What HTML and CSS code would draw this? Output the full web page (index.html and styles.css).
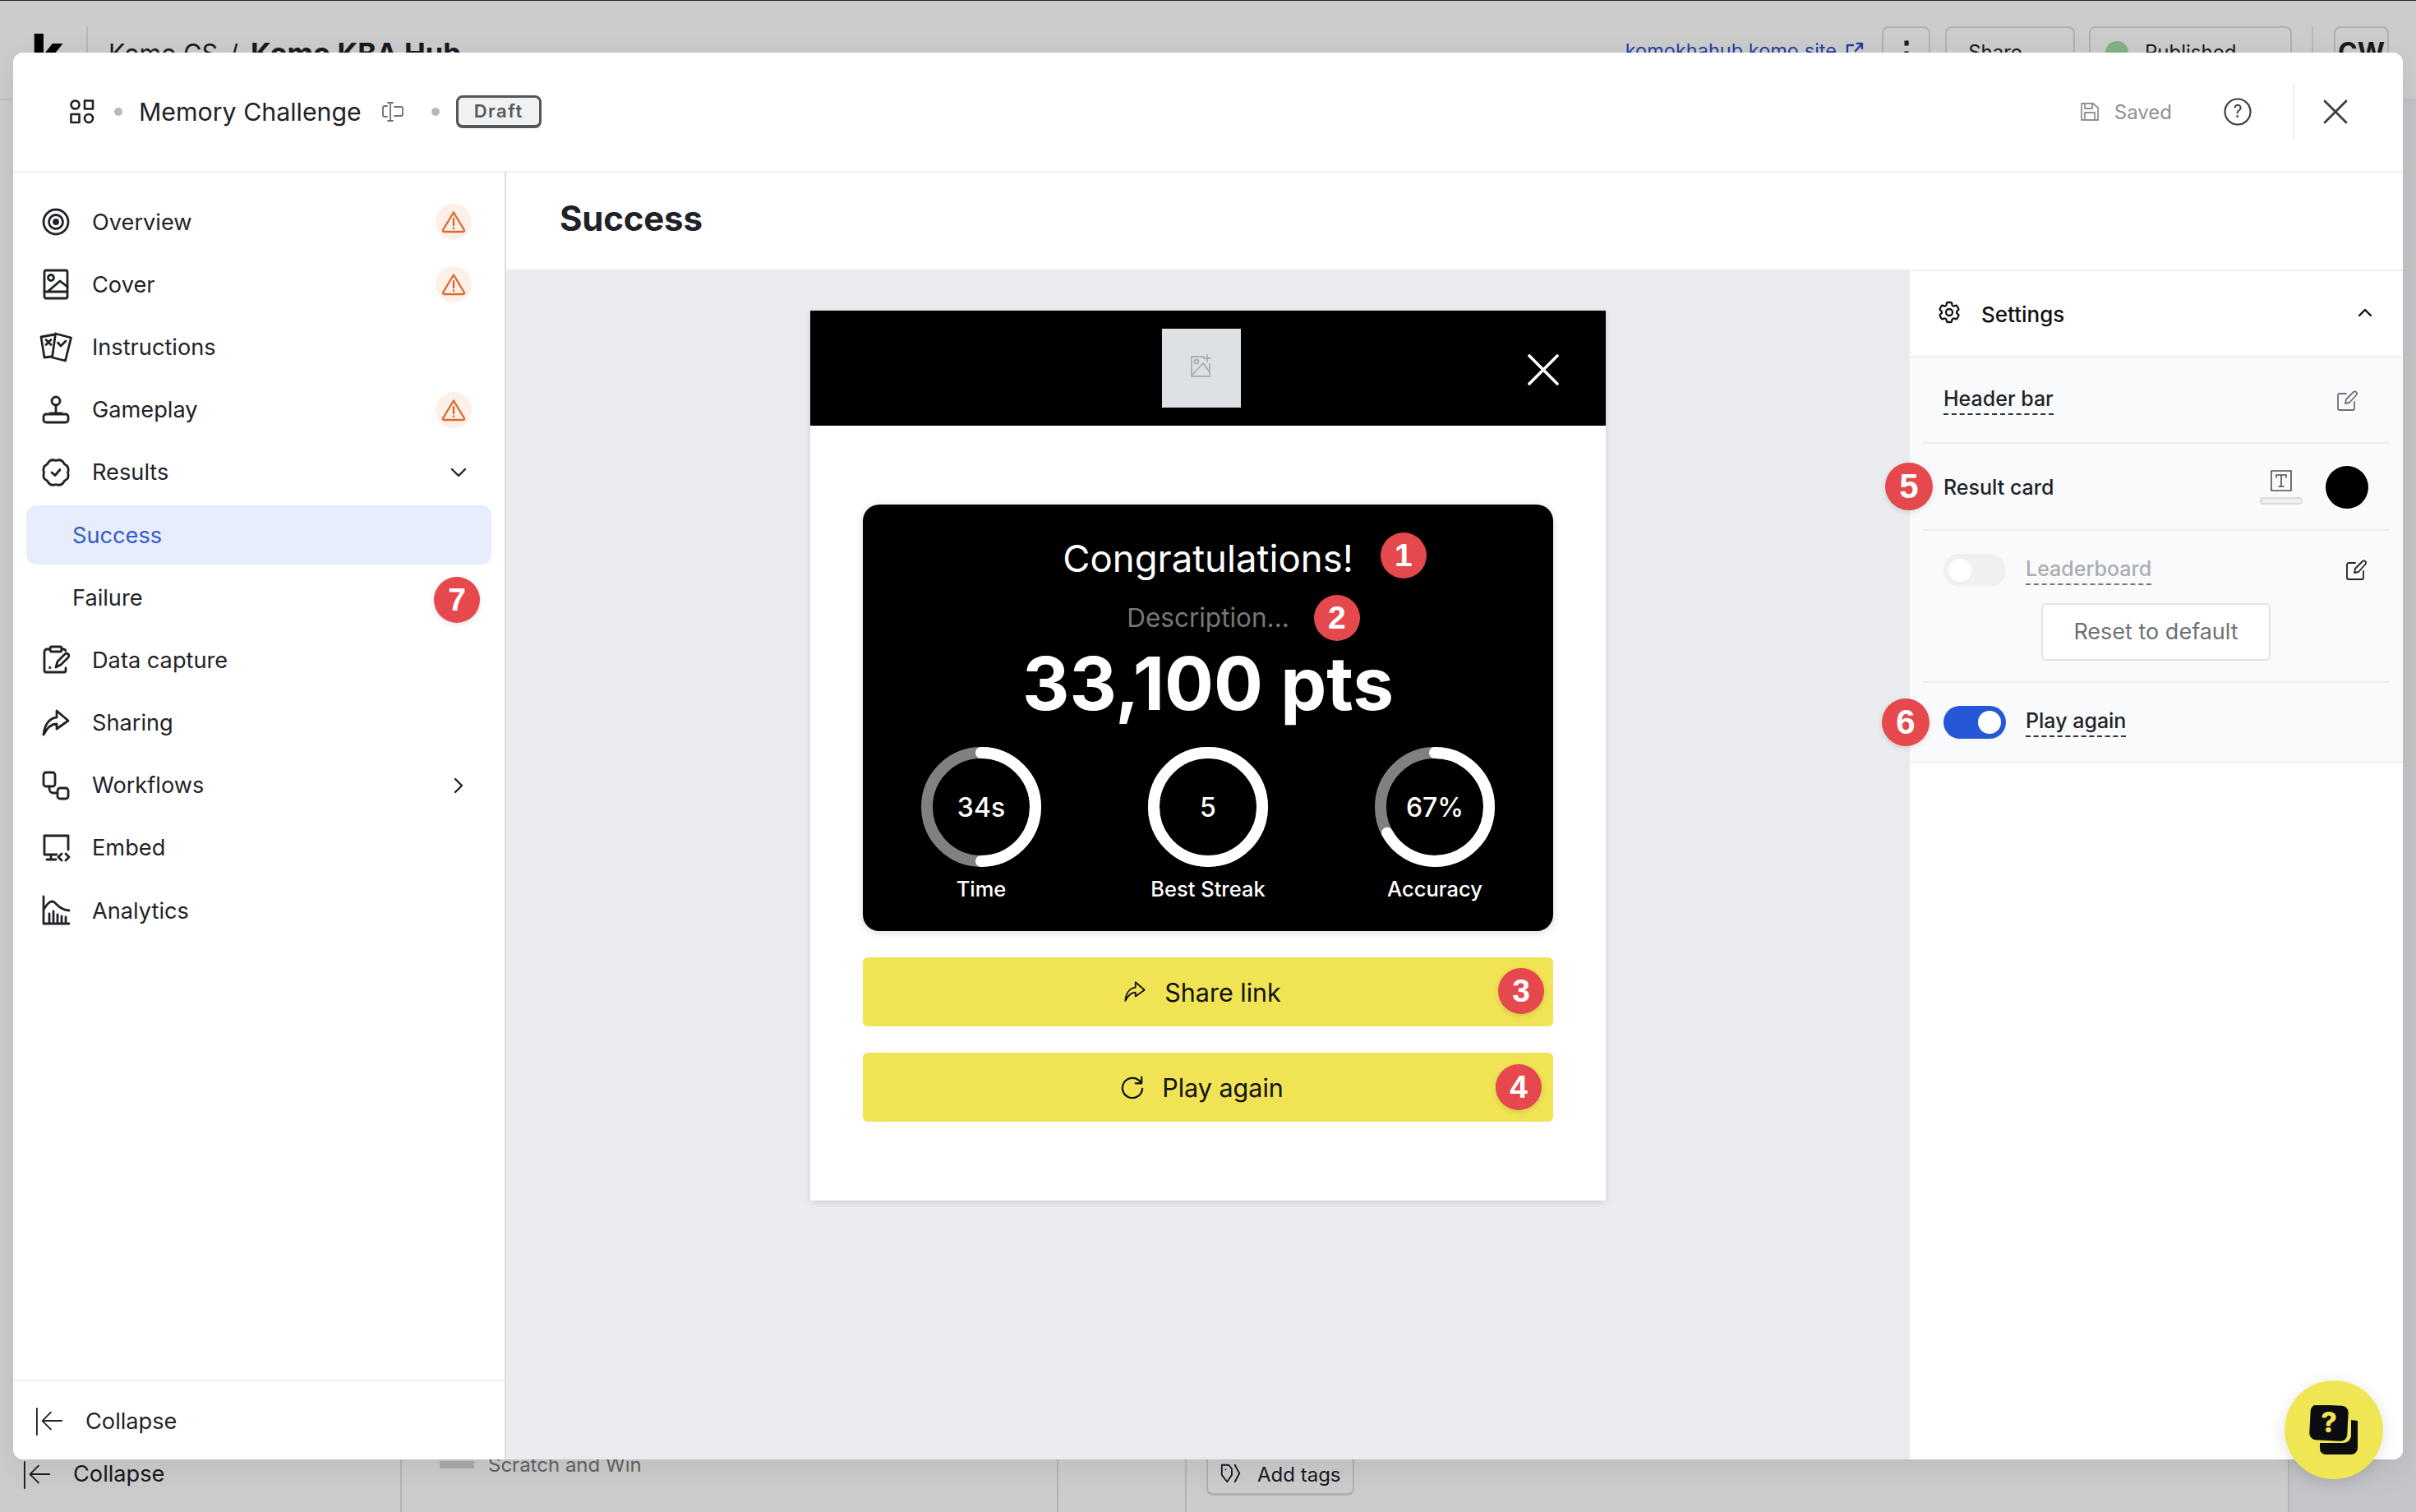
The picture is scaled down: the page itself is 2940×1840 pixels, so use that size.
FILE: index.html
```html
<!DOCTYPE html>
<html lang="en">
<head>
  <meta charset="UTF-8" />
  <title>Memory Challenge</title>
  <link rel="stylesheet" href="styles.css">
</head>
<body>
<div class="app">

  <!-- page behind the modal -->
  <header class="topbar">
    <span class="logo">k</span>
    <span class="topbar-line"></span>
    <span class="crumb">Komo CS</span>
    <span class="crumb-sep">/</span>
    <span class="crumb-strong">Komo KBA Hub</span>
    <a class="site-link">komokhahub.komo.site</a>
    <svg class="ext-icon" viewBox="0 0 24 24"><path d="M10 4H3v17h17v-7M13 11l8-9M15 2h6v6"/></svg>
    <span class="top-btn kebab">⋮</span>
    <span class="top-btn share">Share</span>
    <span class="top-btn published"><i class="green-dot"></i>Published</span>
    <span class="topbar-line second"></span>
    <span class="top-btn avatar">CW</span>
  </header>
  <div class="page-cols">
    <div class="page-col col-left">
      <svg class="collapse-icon" viewBox="0 0 36 36"><path d="M2 1v34M34 17H10M20 6L9 17l11 11"/></svg>
      <span>Collapse</span>
    </div>
    <div class="page-col col-mid"><i class="grey-bar"></i><span class="scratch">Scratch and Win</span></div>
    <div class="page-col col-gap"></div>
    <div class="page-col col-tags">
      <span class="tags-btn">
        <svg viewBox="0 0 30 30"><path d="M3 4h9l4 5v8l-6 9-7-9zM20 4l6 11-6 11M8 10h.1"/></svg>
        Add tags
      </span>
    </div>
    <div class="page-col col-end"></div>
  </div>
  <div class="dim"></div>

  <!-- modal -->
  <div class="modal">
    <div class="modal-head">
      <svg class="shapes-icon" viewBox="0 0 30 30"><circle cx="6.500" cy="6.500" r="5"/><rect x="18" y="1.500" width="10" height="10"/><rect x="1.500" y="18" width="10" height="10"/><circle cx="23" cy="23" r="5"/></svg>
      <i class="head-dot"></i>
      <span class="game-title">Memory Challenge</span>
      <svg class="rename-icon" viewBox="0 0 26 24"><path d="M7 1h6M7 23h6M10 1v22M6 5H3a2 2 0 0 0-2 2v9a2 2 0 0 0 2 2h3M15 6h8a2 2 0 0 1 2 2v7a2 2 0 0 1-2 2h-8"/></svg>
      <i class="head-dot"></i>
      <span class="draft">Draft</span>
      <svg class="saved-icon" viewBox="0 0 22 22"><path d="M1 1h14l6 5v15H1zM5 1v6h9V1M5 21v-9h12v9"/></svg>
      <span class="saved">Saved</span>
      <svg class="help-icon" viewBox="0 0 34 34"><circle cx="17" cy="17" r="15.500"/><text x="17" y="24" text-anchor="middle">?</text></svg>
      <span class="head-divider"></span>
      <svg class="close-icon" viewBox="0 0 30 30"><path d="M2 2l26 26M28 2L2 28"/></svg>
    </div>

    <div class="modal-body">
      <aside class="sidebar">
        <nav class="nav">
          <div class="nav-row">
            <svg class="nav-icon" viewBox="0 0 36 36"><circle cx="18" cy="18" r="15"/><circle cx="18" cy="18" r="8.500"/><circle class="solid" cx="18" cy="18" r="2.500"/></svg>
            <span>Overview</span>
            <span class="warn"><svg viewBox="0 0 30 28"><path d="M15 2.500L28 24a1.500 1.500 0 0 1-1.300 2H3.300A1.500 1.500 0 0 1 2 24zM15 10v8M15 21.500v.5"/></svg></span>
          </div>
          <div class="nav-row">
            <svg class="nav-icon" viewBox="0 0 36 36"><rect x="4" y="1" width="28" height="34" rx="2"/><path d="M4 27h28M9 26l14-12 9 7"/><circle cx="12" cy="10" r="3.500"/></svg>
            <span>Cover</span>
            <span class="warn"><svg viewBox="0 0 30 28"><path d="M15 2.500L28 24a1.500 1.500 0 0 1-1.300 2H3.300A1.500 1.500 0 0 1 2 24zM15 10v8M15 21.500v.5"/></svg></span>
          </div>
          <div class="nav-row">
            <svg class="nav-icon" viewBox="0 0 36 36"><path d="M16 3L-.5 6l4 25 8-1M17 2l19 5-7 28-16-4zM5.500 9.500l6 6M11.500 9.500l-6 6M20 13l3.500 4 6-6" transform="translate(.5 0)"/></svg>
            <span>Instructions</span>
          </div>
          <div class="nav-row">
            <svg class="nav-icon" viewBox="0 0 36 36"><circle cx="18" cy="7" r="5"/><path d="M18 12v10M11 22h14"/><rect x="3" y="23" width="30" height="10" rx="3"/></svg>
            <span>Gameplay</span>
            <span class="warn"><svg viewBox="0 0 30 28"><path d="M15 2.500L28 24a1.500 1.500 0 0 1-1.300 2H3.300A1.500 1.500 0 0 1 2 24zM15 10v8M15 21.500v.5"/></svg></span>
          </div>
          <div class="nav-row">
            <svg class="nav-icon" viewBox="0 0 36 36"><path d="M32.500 18Q35.100 25.100 28.300 28.300Q25.100 35.100 18 32.500Q10.900 35.100 7.700 28.300Q.9 25.100 3.500 18Q.9 10.900 7.700 7.700Q10.900 .9 18 3.500Q25.100 .9 28.300 7.700Q35.100 10.900 32.500 18ZM13 18l4 3.500 6-7"/></svg>
            <span>Results</span>
            <svg class="chev" viewBox="0 0 20 20"><path d="M2 6l8 8 8-8"/></svg>
          </div>
          <div class="nav-row sub active"><span>Success</span></div>
          <div class="nav-row sub">
            <span>Failure</span>
            <b class="num num-7">7</b>
          </div>
          <div class="nav-row">
            <svg class="nav-icon" viewBox="0 0 36 36"><path d="M11 5H7a3 3 0 0 0-3 3v23a2 2 0 0 0 2 2h22a2 2 0 0 0 2-2v-3M25 5h3a3 3 0 0 1 2 2"/><rect x="11" y="2" width="14" height="6" rx="2"/><path d="M18 27l2-7 9-9a2.500 2.500 0 0 1 4 4l-9 9zM10.500 27.500h.5"/></svg>
            <span>Data capture</span>
          </div>
          <div class="nav-row">
            <svg class="nav-icon" viewBox="0 0 36 36"><path d="M19 3l14 12-14 10v-6C12 19 7 24 3 32c1-12 7-20 16-21z"/></svg>
            <span>Sharing</span>
          </div>
          <div class="nav-row">
            <svg class="nav-icon" viewBox="0 0 36 36"><rect x="3" y="2" width="14" height="17" rx="3"/><rect x="20" y="21" width="13" height="13" rx="3"/><path d="M10 19v3a5 5 0 0 0 5 5h5"/></svg>
            <span>Workflows</span>
            <svg class="chev" viewBox="0 0 20 20"><path d="M6 2l8 8-8 8"/></svg>
          </div>
          <div class="nav-row">
            <svg class="nav-icon" viewBox="0 0 36 36"><path d="M4 26V3h29v17M4 26h15M12 26v6M7 32h11M25 25l-4 4 4 4M30 25l4 4-4 4"/></svg>
            <span>Embed</span>
          </div>
          <div class="nav-row">
            <svg class="nav-icon" viewBox="0 0 36 36"><path d="M3 1v33h31M3 17c5-8 9-12 13-9 5 4 8 9 18 10M10 33V22M15 33V19M20 33V23M25 33V25M30 33V26"/></svg>
            <span>Analytics</span>
          </div>
        </nav>
        <div class="side-foot">
          <svg class="collapse-icon" viewBox="0 0 36 36"><path d="M2 1v34M34 17H10M20 6L9 17l11 11"/></svg>
          <span>Collapse</span>
        </div>
      </aside>

      <main class="editor">
        <h1 class="editor-title">Success</h1>
        <div class="editor-body">
          <div class="canvas">
            <div class="preview">
              <div class="preview-bar">
                <div class="logo-slot">
                  <svg viewBox="0 0 28 28"><path d="M17 3H2v24h22V12M21 1v8M17 5h8M2 26l14-15 8 11"/><circle cx="8" cy="9" r="2.500"/></svg>
                </div>
                <svg class="preview-close" viewBox="0 0 38 38"><path d="M2 2l34 34M36 2L2 36"/></svg>
              </div>
              <div class="preview-body">
                <div class="result-card">
                  <div class="congrats"><span>Congratulations!<b class="num num-1">1</b></span></div>
                  <div class="desc"><span>Description...<b class="num num-2">2</b></span></div>
                  <div class="points">33,100 pts</div>
                  <div class="stats">
                    <div class="stat">
                      <svg class="ring" viewBox="0 0 146 146"><circle class="track" cx="73" cy="73" r="66"/><circle class="prog" cx="73" cy="73" r="66" pathLength="100" stroke-dasharray="50 100"/></svg>
                      <span class="ring-val">34s</span>
                      <span class="stat-label">Time</span>
                    </div>
                    <div class="stat">
                      <svg class="ring" viewBox="0 0 146 146"><circle class="track" cx="73" cy="73" r="66"/><circle class="prog" cx="73" cy="73" r="66" pathLength="100" stroke-dasharray="100 100"/></svg>
                      <span class="ring-val">5</span>
                      <span class="stat-label">Best Streak</span>
                    </div>
                    <div class="stat">
                      <svg class="ring" viewBox="0 0 146 146"><circle class="track" cx="73" cy="73" r="66"/><circle class="prog" cx="73" cy="73" r="66" pathLength="100" stroke-dasharray="67 100"/></svg>
                      <span class="ring-val">67%</span>
                      <span class="stat-label">Accuracy</span>
                    </div>
                  </div>
                </div>
                <div class="cta">
                  <svg viewBox="0 0 36 36"><path d="M19 3l14 12-14 10v-6C12 19 7 24 3 32c1-12 7-20 16-21z"/></svg>
                  <span>Share link</span>
                  <b class="num num-3">3</b>
                </div>
                <div class="cta">
                  <svg viewBox="0 0 30 30"><path d="M26 9A13 13 0 1 0 28 17M27 2v8h-8"/></svg>
                  <span>Play again</span>
                  <b class="num num-4">4</b>
                </div>
              </div>
            </div>
          </div>

          <section class="settings">
            <div class="settings-head">
              <svg class="gear" viewBox="0 0 24 24"><path d="M9.594 3.94c.09-.542.56-.94 1.11-.94h2.593c.55 0 1.02.398 1.11.94l.213 1.281c.063.374.313.686.645.87.074.04.147.083.22.127.324.196.72.257 1.075.124l1.217-.456a1.125 1.125 0 011.37.49l1.296 2.247a1.125 1.125 0 01-.26 1.431l-1.003.827c-.293.24-.438.613-.431.992a6.759 6.759 0 010 .255c-.007.378.138.75.43.99l1.005.828c.424.35.534.954.26 1.43l-1.298 2.247a1.125 1.125 0 01-1.369.491l-1.217-.456c-.355-.133-.75-.072-1.076.124a6.57 6.57 0 01-.22.128c-.331.183-.581.495-.644.869l-.213 1.28c-.09.543-.56.941-1.11.941h-2.594c-.55 0-1.02-.398-1.11-.94l-.213-1.281c-.062-.374-.312-.686-.644-.87a6.52 6.52 0 01-.22-.127c-.325-.196-.72-.257-1.076-.124l-1.217.456a1.125 1.125 0 01-1.369-.49l-1.297-2.247a1.125 1.125 0 01.26-1.431l1.004-.827c.292-.24.437-.613.43-.992a6.932 6.932 0 010-.255c.007-.378-.138-.75-.43-.99l-1.004-.828a1.125 1.125 0 01-.26-1.43l1.297-2.247a1.125 1.125 0 011.37-.491l1.216.456c.356.133.751.072 1.076-.124.072-.044.146-.087.22-.128.332-.183.582-.495.644-.869l.214-1.281z"/><circle cx="12" cy="12" r="3"/></svg>
              <span>Settings</span>
              <svg class="chev-up" viewBox="0 0 20 20"><path d="M3 14l7-7 7 7"/></svg>
            </div>
            <div class="settings-list">
              <div class="set-row row-header">
                <span class="dashed">Header bar</span>
                <svg class="edit-icon soft" viewBox="0 0 26 26"><path d="M12 4H4a2 2 0 0 0-2 2v16a2 2 0 0 0 2 2h16a2 2 0 0 0 2-2v-8M11 16l1-5L21 2a2.500 2.500 0 0 1 3.500 3.500L16 15z"/></svg>
              </div>
              <div class="set-row row-card">
                <b class="num num-5">5</b>
                <span>Result card</span>
                <span class="text-style">
                  <svg viewBox="0 0 26 26"><path d="M1 1h24v24H1zM7 9V6h12v3M13 6v14M10 20h6"/></svg>
                  <i></i>
                </span>
                <i class="swatch"></i>
              </div>
              <div class="set-row row-board">
                <div class="board-top">
                  <i class="toggle"></i>
                  <span class="dashed muted">Leaderboard</span>
                  <svg class="edit-icon" viewBox="0 0 26 26"><path d="M12 4H4a2 2 0 0 0-2 2v16a2 2 0 0 0 2 2h16a2 2 0 0 0 2-2v-8M11 16l1-5L21 2a2.500 2.500 0 0 1 3.500 3.500L16 15z"/></svg>
                </div>
                <span class="reset">Reset to default</span>
              </div>
              <div class="set-row row-play">
                <b class="num num-6">6</b>
                <i class="toggle on"></i>
                <span class="dashed">Play again</span>
              </div>
            </div>
          </section>
        </div>
      </main>
    </div>
  </div>

  <!-- help bubble -->
  <div class="chat">
    <svg viewBox="0 0 60 60"><path d="M51 18l8 1v33a8 8 0 0 1-8 8H20a7 7 0 0 1-7-7v-7h29a9 9 0 0 0 9-9z"/><rect x="1" y="0" width="46" height="43" rx="8" transform="rotate(3 24 21)"/><text x="24" y="33" text-anchor="middle">?</text></svg>
  </div>
</div>
</body>
</html>
```

FILE: styles.css
```css
* {
  box-sizing: border-box;
}

html, body {
  margin: 0;
  height: 100%;
}

body {
  font-family: Inter, "Liberation Sans", sans-serif;
  color: #1f2328;
  background: #fff;
  overflow: hidden;
}

svg {
  display: block;
  flex: none;
  fill: none;
  stroke: currentColor;
  stroke-width: 2.4;
  stroke-linecap: round;
  stroke-linejoin: round;
}

i {
  display: block;
}

.app {
  position: relative;
  width: 2940px;
  height: 1840px;
  display: flex;
  flex-direction: column;
}

/* page behind */
.topbar {
  height: 122px;
  flex: none;
  display: flex;
  align-items: flex-start;
  padding: 31px 33px 0 38px;
  border-top: 1px solid #333;
  border-bottom: 2px solid #eee;
  font-size: 30.500px;
  line-height: 66px;
}

.logo {
  font-size: 66px;
  font-weight: 800;
  color: #000;
  width: 67px;
}

.topbar-line {
  width: 2px;
  height: 64px;
  background: #e4e4e4;
}

.topbar-line.second {
  margin: 0 25px 0 24px;
}

.crumb {
  margin-left: 25px;
}

.crumb-sep {
  margin: 0 15px 0 14px;
}

.crumb-strong {
  font-size: 34.500px;
  font-weight: 700;
}

.site-link {
  margin-left: auto;
  font-size: 23.500px;
  line-height: 60px;
  color: #2a51c8;
}

.ext-icon {
  width: 24px;
  height: 24px;
  margin: 19px 21px 0 10px;
  color: #2a51c8;
}

.top-btn {
  height: 70px;
  border: 2px solid #ddd;
  border-bottom-width: 3px;
  border-radius: 8px;
  font-size: 24px;
  line-height: 60px;
  text-align: center;
}

.kebab {
  width: 59px;
  font-size: 38px;
  font-weight: 700;
  margin-right: 18px;
}

.share {
  width: 158px;
  margin-right: 17px;
  padding-right: 36px;
}

.published {
  width: 247px;
  display: flex;
  padding-left: 18px;
  gap: 20px;
}

.green-dot {
  width: 28px;
  height: 28px;
  margin-top: 16px;
  border-radius: 50%;
  background: #a0e0a8;
}

.avatar {
  width: 67px;
  font-size: 32px;
  font-weight: 700;
}

.page-cols {
  flex: 1;
  display: flex;
}

.page-col {
  border-right: 2px solid #e2e2e2;
  display: flex;
  align-items: flex-end;
}

.col-left {
  width: 489px;
  gap: 27px;
  padding: 0 0 28px 28px;
  font-size: 27.200px;
  line-height: 36px;
}

.col-mid {
  width: 799px;
  padding: 0 0 41px 46px;
  gap: 17px;
  font-size: 24px;
  line-height: 32px;
  color: #7c7c7c;
}

.grey-bar {
  width: 42px;
  height: 9px;
  margin-bottom: 12px;
  background: #d8d8d8;
}

.col-gap {
  width: 156px;
}

.col-tags {
  width: 1342px;
  padding: 0 0 20px 24px;
}

.col-end {
  flex: 1;
  border: 0;
  background: #f6f7fb;
}

.tags-btn {
  width: 180px;
  height: 80px;
  display: flex;
  align-items: flex-end;
  gap: 18px;
  padding: 0 0 6px 14px;
  border: 2px solid #ddd;
  border-bottom-width: 3px;
  border-radius: 8px;
  font-size: 24px;
  line-height: 32px;
}

.tags-btn svg {
  width: 28px;
  height: 28px;
  margin-bottom: 4px;
  stroke-width: 2;
}

.dim {
  position: absolute;
  inset: 0;
  background: rgba(0, 0, 0, 0.2);
}

/* modal */
.modal {
  position: absolute;
  top: 64px;
  left: 16px;
  width: 2908px;
  height: 1712px;
  display: flex;
  flex-direction: column;
  background: #fff;
  border-radius: 12px;
  overflow: hidden;
  box-shadow: 0 10px 40px rgba(0, 0, 0, 0.08);
}

.modal-head {
  height: 146px;
  flex: none;
  display: flex;
  align-items: center;
  padding-left: 69px;
  border-bottom: 2px solid #eeeff1;
}

.shapes-icon {
  width: 30px;
  height: 30px;
  stroke-width: 2.6;
}

.head-dot {
  width: 10px;
  height: 10px;
  border-radius: 50%;
  background: #b8b8b8;
  margin: 0 20px 0 24px;
}

.game-title {
  font-size: 30.300px;
  line-height: 40px;
}

.rename-icon {
  width: 26px;
  height: 24px;
  margin: 0 10px 0 25px;
  color: #6a6f75;
  stroke-width: 1.8;
}

.draft {
  width: 104px;
  height: 40px;
  border: 3px solid #555;
  border-bottom-width: 4px;
  border-radius: 8px;
  background: #f0f1f2;
  font-size: 22px;
  font-weight: 600;
  line-height: 33px;
  letter-spacing: 1.500px;
  text-align: center;
  color: #55585c;
}

.saved-icon {
  width: 22px;
  height: 22px;
  margin-left: auto;
  color: #8e9196;
  stroke-width: 1.800;
}

.saved {
  margin-left: 19px;
  font-size: 24px;
  color: #8e9196;
}

.help-icon {
  width: 34px;
  height: 34px;
  margin-left: 63px;
  color: #3a3d42;
  stroke-width: 2.200;
}

.help-icon text {
  font-size: 21px;
  fill: currentColor;
  stroke: none;
}

.head-divider {
  width: 2px;
  height: 68px;
  margin-left: 50px;
  background: #efefef;
}

.close-icon {
  width: 30px;
  height: 30px;
  margin: 0 67px 0 35px;
  color: #3a3d42;
  stroke-width: 2.800;
}

.modal-body {
  flex: 1;
  display: flex;
  min-height: 0;
}

/* sidebar */
.sidebar {
  width: 600px;
  flex: none;
  display: flex;
  flex-direction: column;
  justify-content: space-between;
  border-right: 2px solid #dcdcdc;
}

.nav {
  padding-top: 22px;
}

.nav-row {
  position: relative;
  height: 76.200px;
  display: flex;
  align-items: center;
  gap: 26px;
  padding: 0 40px 0 34px;
  font-size: 27.200px;
}

.nav-icon {
  width: 36px;
  height: 36px;
  overflow: visible;
  stroke-width: 2.800;
}

.solid {
  fill: currentColor;
}

.warn {
  width: 44px;
  height: 44px;
  margin-left: auto;
  display: flex;
  align-items: center;
  justify-content: center;
  border-radius: 50%;
  background: #fdf0e9;
  color: #dd6b2f;
}

.warn svg {
  width: 30px;
  height: 28px;
  stroke-width: 2.400;
}

.chev {
  width: 20px;
  height: 20px;
  margin: 0 6px 0 auto;
}

.sub {
  padding-left: 72px;
}

.active {
  height: 72.200px;
  margin: 2px 0 2px 16px;
  width: 566px;
  padding-left: 56px;
  background: #e8edfb;
  border-radius: 12px;
  color: #2f5ccb;
}

.num {
  position: absolute;
  display: flex;
  align-items: center;
  justify-content: center;
  width: 56px;
  height: 56px;
  border-radius: 50%;
  background: #e5484d;
  color: #fff;
  font-family: "Liberation Sans", sans-serif;
  font-size: 39px;
  font-weight: 700;
  box-shadow: 0 2px 6px rgba(0, 0, 0, 0.12);
}

.num-7 {
  right: 30px;
  top: 13px;
}

.side-foot {
  height: 97px;
  flex: none;
  display: flex;
  align-items: center;
  gap: 27px;
  padding: 2px 0 0 27px;
  border-top: 2px solid #eeeff1;
  font-size: 27.200px;
}

.collapse-icon {
  width: 34px;
  height: 34px;
  stroke-width: 2;
}

/* editor */
.editor {
  flex: 1;
  display: flex;
  flex-direction: column;
  min-width: 0;
}

.editor-title {
  height: 118px;
  flex: none;
  margin: 0;
  padding: 0 0 0 65px;
  font-size: 42px;
  font-weight: 700;
  letter-spacing: -0.200px;
  line-height: 112px;
}

.editor-body {
  flex: 1;
  display: flex;
  min-height: 0;
}

.canvas {
  flex: 1;
  padding-top: 50px;
  display: flex;
  justify-content: center;
  align-items: flex-start;
  background: #e9ebee;
}

.preview {
  width: 968px;
  background: #fff;
  box-shadow: 0 2px 8px rgba(0, 0, 0, 0.12);
}

.preview-bar {
  position: relative;
  height: 140px;
  display: flex;
  align-items: center;
  justify-content: center;
  padding-right: 16px;
  background: #000;
}

.logo-slot {
  width: 96px;
  height: 96px;
  display: flex;
  align-items: center;
  justify-content: center;
  padding-bottom: 6px;
  background: #dde1e5;
  color: #a9aeb3;
}

.logo-slot svg {
  width: 28px;
  height: 28px;
  stroke-width: 1.800;
}

.preview-close {
  position: absolute;
  right: 57px;
  top: 53px;
  width: 38px;
  height: 38px;
  color: #fff;
  stroke-width: 3.600;
}

.preview-body {
  padding: 96px 64px 96px;
}

.result-card {
  height: 519px;
  padding-top: 40px;
  background: #000;
  border-radius: 20px;
  color: #fff;
  text-align: center;
  box-shadow: 0 2px 10px rgba(0, 0, 0, 0.15);
}

.congrats {
  font-size: 45.500px;
  line-height: 52px;
}

.congrats span,
.desc span {
  position: relative;
  display: inline-block;
}

.num-1 {
  left: 100%;
  margin-left: 33px;
  top: -6px;
}

.desc {
  margin-top: 24px;
  font-size: 31.500px;
  line-height: 44px;
  color: #777;
}

.num-2 {
  left: 100%;
  margin-left: 30px;
  top: -6px;
}

.points {
  margin-top: 10px;
  font-size: 89px;
  font-weight: 700;
  line-height: 96px;
}

.stats {
  margin-top: 29px;
  display: grid;
  grid-template-columns: repeat(3, 276px);
  justify-content: center;
}

.stat {
  position: relative;
  display: flex;
  flex-direction: column;
  align-items: center;
}

.ring {
  width: 146px;
  height: 146px;
  transform: rotate(-90deg);
  stroke-width: 14;
}

.track {
  stroke: #808080;
}

.prog {
  stroke: #fff;
}

.ring-val {
  position: absolute;
  top: 54px;
  font-size: 32px;
  font-weight: 500;
  line-height: 40px;
}

.stat-label {
  margin-top: 11px;
  font-size: 25.500px;
  font-weight: 500;
  line-height: 32px;
}

.cta {
  position: relative;
  height: 84px;
  margin-top: 32px;
  display: flex;
  align-items: center;
  justify-content: center;
  gap: 22px;
  padding-right: 14px;
  background: #f0e354;
  border-radius: 6px;
  font-size: 30.500px;
  color: #111;
}

.cta svg {
  width: 28px;
  height: 28px;
  stroke-width: 2.400;
}

.num-3 {
  right: 11px;
  top: 13px;
}

.num-4 {
  right: 14px;
  top: 14px;
}

/* settings panel */
.settings {
  width: 600px;
  flex: none;
  border-top: 2px solid #eeeff1;
  background: #fff;
}

.settings-head {
  height: 105px;
  display: flex;
  align-items: center;
  gap: 23px;
  padding: 2px 36px 0 32px;
  border-bottom: 2px solid #eeeff1;
  font-size: 26px;
  font-weight: 500;
  color: #111;
}

.gear {
  width: 32px;
  height: 32px;
  stroke-width: 1.700;
  margin-top: -6px;
}

.chev-up {
  width: 20px;
  height: 20px;
  margin-left: auto;
  margin-top: -6px;
}

.settings-list {
  padding: 0 16px;
  background: #f9fafb;
  border-bottom: 2px solid #eeeff1;
}

.set-row {
  position: relative;
  display: flex;
  align-items: center;
  padding: 0 25px;
  border-bottom: 2px solid #eeeff1;
  font-size: 25px;
  font-weight: 500;
}

.set-row:last-child {
  border-bottom: 0;
}

.row-header {
  height: 105px;
  justify-content: space-between;
  padding: 2px 39px 0 25px;
}

.dashed {
  padding-bottom: 3px;
  border-bottom: 2px dashed #333;
  line-height: 30px;
}

.edit-icon {
  width: 26px;
  height: 26px;
  stroke-width: 1.800;
}

.edit-icon.soft {
  color: #6a6f75;
}

.row-card {
  height: 106px;
  padding-top: 2px;
}

.num-5 {
  left: -46px;
  top: 23px;
  width: 58px;
  height: 58px;
  font-size: 42px;
}

.text-style {
  margin-left: auto;
  width: 52px;
  display: flex;
  flex-direction: column;
  align-items: center;
  gap: 7px;
}

.text-style svg {
  width: 26px;
  height: 26px;
  color: #4a4e53;
  stroke-width: 1.600;
}

.text-style i {
  width: 52px;
  height: 9px;
  border: 2px solid #dcdcdc;
  border-radius: 4px;
  background: #eee;
}

.swatch {
  width: 52px;
  height: 52px;
  margin: 0 1px 0 28px;
  border-radius: 50%;
  background: #000;
}

.row-board {
  height: 185px;
  flex-direction: column;
  align-items: stretch;
  padding-top: 28px;
}

.board-top {
  display: flex;
  align-items: center;
  gap: 24px;
  padding-right: 3px;
}

.board-top .edit-icon {
  margin-left: auto;
}

.toggle {
  position: relative;
  width: 76px;
  height: 40px;
  flex: none;
  border-radius: 20px;
  background: #eff0f1;
}

.toggle::after {
  content: "";
  position: absolute;
  left: 6px;
  top: 6px;
  width: 28px;
  height: 28px;
  border-radius: 50%;
  background: #fff;
}

.toggle.on {
  background: #2557d6;
}

.toggle.on::after {
  left: 42px;
}

.muted {
  color: #a9adb2;
  border-bottom-color: #777;
}

.reset {
  width: 279px;
  height: 70px;
  margin: 20px 0 0 119px;
  border: 2px solid #e2e3e5;
  border-radius: 6px;
  background: #fff;
  font-size: 27px;
  font-weight: 400;
  line-height: 66px;
  text-align: center;
  color: #6d7075;
}

.row-play {
  height: 96px;
  gap: 24px;
}

.num-6 {
  left: -50px;
  top: 19px;
  width: 58px;
  height: 58px;
  font-size: 42px;
}

/* help bubble */
.chat {
  position: absolute;
  left: 2780px;
  top: 1680px;
  width: 120px;
  height: 120px;
  display: flex;
  align-items: center;
  justify-content: center;
  border-radius: 50%;
  background: #f0e654;
  box-shadow: 0 4px 20px rgba(0, 0, 0, 0.12);
}

.chat svg {
  width: 60px;
  height: 60px;
  fill: #0b0b12;
  stroke: none;
}

.chat text {
  fill: #f0e654;
  font-size: 34px;
  font-weight: 800;
}
```
